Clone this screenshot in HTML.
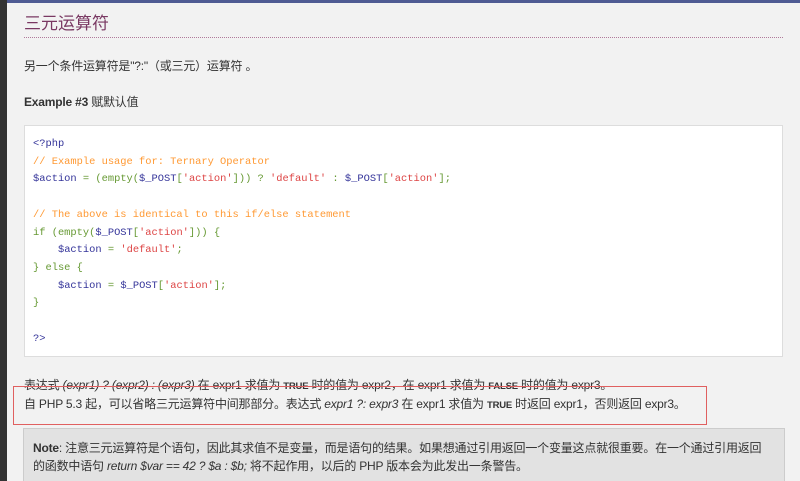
<!DOCTYPE html>
<html><head><meta charset="utf-8"><style>
html,body{margin:0;width:800px;height:481px;overflow:hidden}
body{background:#f2f2f2;font-family:"Liberation Sans","Noto Sans CJK SC",sans-serif;color:#333;position:relative}
.lbar{position:absolute;left:0;top:0;width:7px;height:481px;background:#333}
.tbar{position:absolute;left:0;top:0;width:800px;height:3px;background:#4f5b93}
.h{position:absolute;left:24px;top:9px;font-size:17px;color:#793862}
.hr{position:absolute;left:24px;top:37px;width:759px;border-top:1px dotted #b07a9a}
.p{position:absolute;left:24px;font-size:12px;white-space:nowrap;letter-spacing:-0.2px}
.code{position:absolute;left:24px;top:125px;width:757px;height:230px;background:#fff;border:1px solid #ddd}
pre{margin:0;position:absolute;left:8px;top:10px;font-family:"Liberation Mono",monospace;font-size:10.4px;line-height:17.7px;color:#369}
.c{color:#f93}.s{color:#d44}.v{color:#339}.k{color:#693}
.red{position:absolute;left:13px;top:386px;width:692px;height:37px;border:1px solid #e06060}
.note{position:absolute;left:23px;top:428px;width:760px;height:60px;background:#e2e2e2;border:1px solid #ccc}
b.t{font-size:9.5px}
</style></head><body>
<div class="tbar"></div><div class="lbar"></div>
<div class="h">三元运算符</div><div class="hr"></div>
<div class="p" style="top:57px">另一个条件运算符是"?:"（或三元）运算符 。</div>
<div class="p" style="top:93px;font-weight:bold">Example #3 <span style="font-weight:normal">赋默认值</span></div>
<div class="code"><pre><span class="v">&lt;?php</span>
<span class="c">// Example usage for: Ternary Operator</span>
<span class="v">$action</span> <span class="k">= (empty(</span><span class="v">$_POST</span><span class="k">[</span><span class="s">'action'</span><span class="k">])) ? </span><span class="s">'default'</span> <span class="k">:</span> <span class="v">$_POST</span><span class="k">[</span><span class="s">'action'</span><span class="k">];</span>

<span class="c">// The above is identical to this if/else statement</span>
<span class="k">if (empty(</span><span class="v">$_POST</span><span class="k">[</span><span class="s">'action'</span><span class="k">])) {</span>
    <span class="v">$action</span> <span class="k">=</span> <span class="s">'default'</span><span class="k">;</span>
<span class="k">} else {</span>
    <span class="v">$action</span> <span class="k">=</span> <span class="v">$_POST</span><span class="k">[</span><span class="s">'action'</span><span class="k">];</span>
<span class="k">}</span>

<span class="v">?&gt;</span></pre></div>
<div class="p" style="top:376px">表达式 <i>(expr1) ? (expr2) : (expr3)</i> 在 expr1 求值为 <b class="t">TRUE</b> 时的值为 expr2，在 expr1 求值为 <b class="t">FALSE</b> 时的值为 expr3。</div>
<div class="p" style="top:395px">自 PHP 5.3 起，可以省略三元运算符中间那部分。表达式 <i>expr1 ?: expr3</i> 在 expr1 求值为 <b class="t">TRUE</b> 时返回 expr1，否则返回 expr3。</div>
<div class="red"></div>
<div class="note"><div class="p" style="left:9px;top:10px;line-height:18px;letter-spacing:-0.2px"><b>Note</b>: 注意三元运算符是个语句，因此其求值不是变量，而是语句的结果。如果想通过引用返回一个变量这点就很重要。在一个通过引用返回<br>的函数中语句 <i>return $var == 42 ? $a : $b;</i> 将不起作用，以后的 PHP 版本会为此发出一条警告。</div></div>
</body></html>
